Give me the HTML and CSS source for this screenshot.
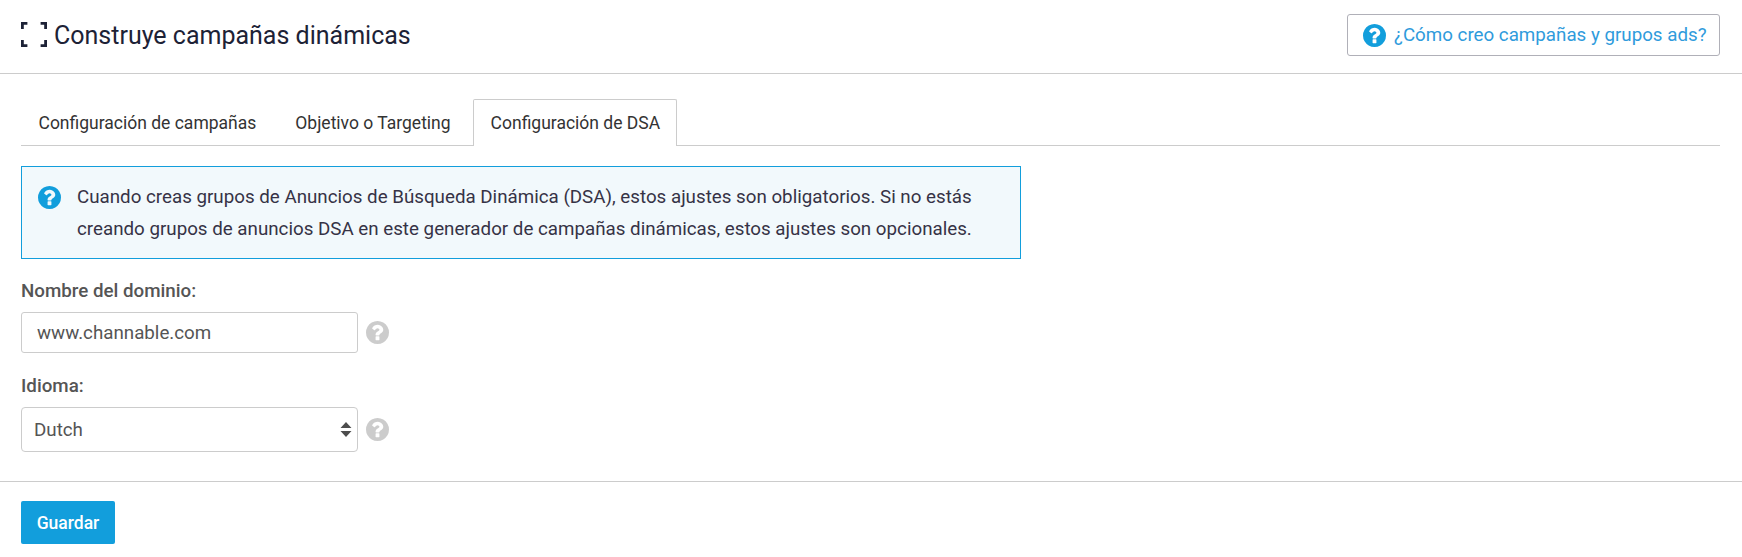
FILE: index.html
```html
<!DOCTYPE html>
<html lang="es">
<head>
<meta charset="utf-8">
<title>Construye campañas dinámicas</title>
<link rel="stylesheet" href="styles.css">
</head>
<body>
<svg class="sprite" width="0" height="0" aria-hidden="true"><symbol id="q" viewBox="128 128 1536 1536"><path fill-rule="evenodd" d="M1024 1376v-192q0-14-9-23t-23-9h-192q-14 0-23 9t-9 23v192q0 14 9 23t23 9h192q14 0 23-9t9-23zm256-672q0-88-55.5-163t-138.5-116-170-41q-243 0-371 213-15 24 8 42l132 100q7 6 19 6 16 0 25-12 53-68 86-92 34-24 86-24 48 0 85.5 26t37.5 59q0 38-20 61t-68 45q-63 28-115.5 86.5t-52.5 125.5v36q0 14 9 23t23 9h192q14 0 23-9t9-23q0-19 21.5-49.5t54.5-49.5q32-18 49-28.5t46-35 44.5-48 28-60.5 12.5-81zm384 192q0 209-103 385.5t-279.5 279.5-385.5 103-385.5-103-279.5-279.5-103-385.5 103-385.5 279.5-279.5 385.5-103 385.5 103 279.5 279.5 103 385.5z"/></symbol></svg>
<header class="topbar">
  <h1 class="title">
    <svg class="title-icon" viewBox="0 0 26 25" width="26" height="25"><path d="M1.4 7V1.4h5M19.6 1.4h5V7M1.4 18v5.600h5M19.6 23.600h5V18" fill="none" stroke="#1d2236" stroke-width="2.8"/></svg>
    <span>Construye campañas dinámicas</span>
  </h1>
  <a class="help-btn" href="#"><svg class="icon icon-blue"><use href="#q"/></svg><span>¿Cómo creo campañas y grupos ads?</span></a>
</header>
<main class="content">
  <nav class="tabs">
    <a class="tab" href="#">Configuración de campañas</a>
    <a class="tab" href="#">Objetivo o Targeting</a>
    <a class="tab tab-active" href="#">Configuración de DSA</a>
  </nav>
  <div class="notice">
    <svg class="icon icon-blue"><use href="#q"/></svg>
    <p>Cuando creas grupos de Anuncios de Búsqueda Dinámica (DSA), estos ajustes son obligatorios. Si no estás creando grupos de anuncios DSA en este generador de campañas dinámicas, estos ajustes son opcionales.</p>
  </div>
  <div class="field">
    <label class="label" for="dom">Nombre del dominio:</label>
    <div class="control-row">
      <input class="input" id="dom" type="text" value="www.channable.com">
      <svg class="icon icon-grey"><use href="#q"/></svg>
    </div>
  </div>
  <div class="field field-select">
    <label class="label" for="lang">Idioma:</label>
    <div class="control-row">
      <div class="select-wrap">
        <select class="select" id="lang"><option>Dutch</option></select>
        <svg class="select-arrows" viewBox="0 0 12 15" width="12" height="15"><path d="M6 0l5.500 6H.5zM6 15L.5 9h11z" fill="#4d4d4d"/></svg>
      </div>
      <svg class="icon icon-grey"><use href="#q"/></svg>
    </div>
  </div>
</main>
<footer class="actions">
  <button class="save" type="button">Guardar</button>
</footer>
</body>
</html>
```
FILE: styles.css
```css
* { box-sizing: border-box; }
html, body { margin: 0; padding: 0; background: #fff; }
body { font-family: Roboto, "Liberation Sans", sans-serif; color: #333; height: 557px; overflow: hidden; }
.sprite { position: absolute; }
.topbar { height: 74px; border-bottom: 1px solid #ccc; padding: 14px 22px 0 21px; display: flex; justify-content: space-between; align-items: flex-start; }
.title { margin: 3px 0 0; display: flex; align-items: flex-start; gap: 7px; font-size: 25px; font-weight: 400; line-height: 34px; color: #1d2236; }
.title-icon { margin-top: 5px; }
.title span { padding-top: 2px; }
.help-btn { width: 373px; height: 42px; border: 1px solid #b0b0b8; border-radius: 3px; display: flex; align-items: center; gap: 8px; padding: 0 0 0 15px; font-size: 18.75px; color: #2f9bdc; text-decoration: none; white-space: nowrap; }
.icon { display: block; width: 23px; height: 23px; flex: none; }
.icon-blue { fill: #129edc; }
.icon-grey { fill: #ccc; }
.content { padding: 25px 21px 0; }
.tabs { display: flex; height: 47px; width: 1699px; border-bottom: 1px solid #ccc; }
.tab { height: 47px; padding: 0 17.5px; line-height: 46px; font-size: 17.5px; color: #333; text-decoration: none; white-space: nowrap; border: 1px solid transparent; border-bottom: 0; margin-right: 2px; }
.tab:first-child { padding-left: 16.5px; }
.tab:nth-child(2) { margin-right: 4px; }
.tab-active { background: #fff; border-color: #ccc; border-radius: 2px 2px 0 0; padding: 0 16px 0 16.5px; }
.notice { width: 1000px; height: 93px; margin-top: 20px; background: #f2f9fc; border: 1px solid #129edc; display: flex; gap: 16px; padding: 14px 16px; }
.notice .icon { margin-top: 4.5px; }
.notice p { margin: 0; font-size: 18.75px; line-height: 32px; color: #363346; width: 930px; }
.field { margin-top: 19px; }
.field-select { margin-top: 20px; }
.label { display: block; font-size: 18.75px; font-weight: 500; line-height: 26px; color: #555; margin-bottom: 8px; }
.control-row { display: flex; align-items: center; gap: 8px; }
.input { width: 337px; height: 41px; border: 1px solid #ccc; border-radius: 3px; padding: 0 15px; font: 18.75px Roboto, sans-serif; color: #555; outline: none; }
.select-wrap { position: relative; width: 337px; height: 45px; }
.select { width: 100%; height: 100%; appearance: none; background: #fff; border: 1px solid #ccc; border-radius: 4px; padding: 0 12px; font: 18.75px Roboto, sans-serif; color: #555; }
.select-arrows { position: absolute; right: 6px; top: 15px; pointer-events: none; }
.actions { margin-top: 29px; border-top: 1px solid #ccc; padding: 19px 21px 0; }
.save { display: block; width: 94px; height: 43px; background: #129edc; border: 0; border-radius: 2px; color: #fff; font: 500 17.5px Roboto, sans-serif; }
```
